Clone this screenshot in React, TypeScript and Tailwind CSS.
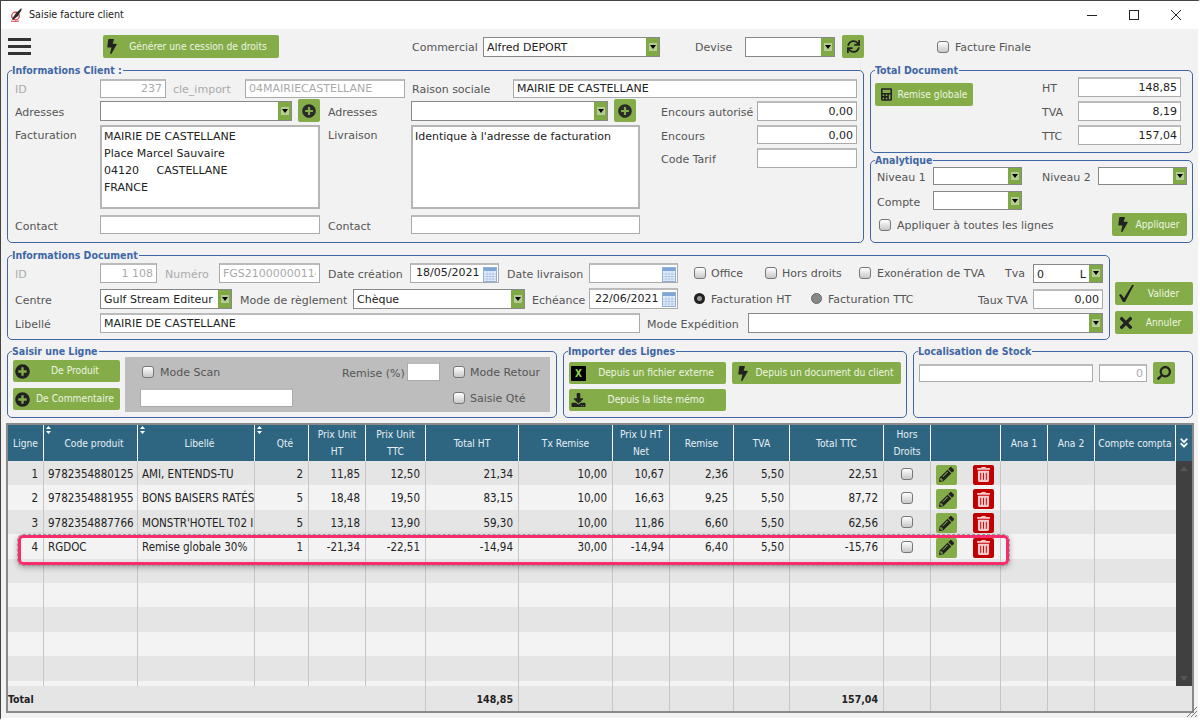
import type { ReactNode } from 'react';
import {
  FaAngleDoubleDown,
  FaBolt,
  FaCalculator,
  FaDownload,
  FaPencilAlt,
  FaPlusCircle,
  FaSearch,
  FaSync,
  FaTimes,
  FaTrashAlt,
} from 'react-icons/fa';

const gridCols =
  'grid grid-cols-[36px_94px_117px_54px_57px_60px_93px_94px_57px_64px_56px_94px_47px_70px_47px_47px_81px]';

function Label({ children, className = '' }: { children: ReactNode; className?: string }) {
  return <span className={`shrink-0 pt-[4px] leading-[14px] whitespace-nowrap text-[#555] ${className}`}>{children}</span>;
}

function Field({ value = '', className = '', right, disabled }: { value?: string; className?: string; right?: boolean; disabled?: boolean }) {
  return (
    <input
      readOnly
      value={value}
      className={`shrink-0 border border-[#aaa] border-t-2 border-t-[#bbb] bg-white px-[3px] text-[11px] outline-none ${right ? 'text-right' : ''} ${disabled ? 'text-[#aaa]' : 'text-[#222]'} ${className}`}
    />
  );
}

function Select({ value = '', className = '' }: { value?: ReactNode; className?: string }) {
  return (
    <div className={`flex shrink-0 items-stretch border border-[#888] bg-white text-[#222] ${className}`}>
      <span className="flex-1 overflow-hidden pl-[3px] leading-[20px] whitespace-nowrap">{value}</span>
      <span className="flex w-[13px] items-center justify-center bg-[#7fa945]">
        <span className="flex h-[8px] w-[8px] items-center justify-center bg-[#b4cc92]">
          <span className="h-0 w-0 border-x-[3px] border-t-[4px] border-x-transparent border-t-black" />
        </span>
      </span>
    </div>
  );
}

function Check({ className = '' }: { className?: string }) {
  return <span className={`block h-[12px] w-[12px] shrink-0 rounded-[3px] border border-[#777] bg-gradient-to-b from-white to-[#c8c8c8] ${className}`} />;
}

function Btn({ icon, children, className = '', textClass = '' }: { icon?: ReactNode; children?: ReactNode; className?: string; textClass?: string }) {
  return (
    <div className={`flex shrink-0 items-center rounded-[2px] bg-[#84ad49] text-[10.2px] text-[#eef4e2] [font-stretch:condensed] ${className}`}>
      {icon}
      {children && <span className={`flex-1 text-center whitespace-nowrap ${textClass}`}>{children}</span>}
    </div>
  );
}

function PlusBtn() {
  return (
    <div className="flex h-[23px] w-[22px] shrink-0 items-center justify-center rounded-[2px] bg-[#84ad49]">
      <FaPlusCircle className="h-[14px] w-[14px] text-[#2a2a2a]" />
    </div>
  );
}

function Group({ title, className = '', children }: { title: string; className?: string; children: ReactNode }) {
  return (
    <fieldset className={`shrink-0 rounded-[5px] border border-[#3f67a5] ${className}`}>
      <legend className="ml-[4px] h-[14px] bg-[#f2f2f2] pr-[1px] text-[10.5px] leading-[14px] font-bold text-[#3f67a5] [font-stretch:condensed]">{title}</legend>
      {children}
    </fieldset>
  );
}

function Calendar() {
  return (
    <svg viewBox="0 0 14 16" className="h-[16px] w-[14px] shrink-0">
      <rect x="0.5" y="1.5" width="13" height="14" fill="#e8f0fa" stroke="#8fb0d8" />
      <rect x="1" y="2" width="12" height="3" fill="#7ea6d6" />
      <path d="M1 8h12M1 10.5h12M1 13h12M4 5v10M7 5v10M10 5v10" stroke="#a8c2e4" strokeWidth="0.8" />
    </svg>
  );
}

function DateField({ value = '', className = '' }: { value?: string; className?: string }) {
  return (
    <div className={`flex shrink-0 items-center border border-[#aaa] border-t-2 border-t-[#bbb] bg-white pr-[1px] pl-[5px] text-[#222] ${className}`}>
      <span className="flex-1">{value}</span>
      <Calendar />
    </div>
  );
}

function Sort() {
  return (
    <svg viewBox="0 0 5 8" className="absolute top-[1px] left-[2px] h-[8px] w-[5px] fill-white">
      <path d="M2.5 0 5 3H0zM2.5 8 0 5h5z" />
    </svg>
  );
}

const headers: { label: ReactNode; sort?: boolean }[] = [
  { label: 'Ligne' },
  { label: 'Code produit', sort: true },
  { label: 'Libellé', sort: true },
  { label: 'Qté', sort: true },
  { label: <>Prix Unit<br />HT</> },
  { label: <>Prix Unit<br />TTC</> },
  { label: 'Total HT' },
  { label: 'Tx Remise' },
  { label: <>Prix U HT<br />Net</> },
  { label: 'Remise' },
  { label: 'TVA' },
  { label: 'Total TTC' },
  { label: <>Hors<br />Droits</> },
  { label: '' },
  { label: 'Ana 1' },
  { label: 'Ana 2' },
  { label: 'Compte compta' },
];

const rows = [
  ['1', '9782354880125', 'AMI, ENTENDS-TU', '2', '11,85', '12,50', '21,34', '10,00', '10,67', '2,36', '5,50', '22,51'],
  ['2', '9782354881955', 'BONS BAISERS RATÉS', '5', '18,48', '19,50', '83,15', '10,00', '16,63', '9,25', '5,50', '87,72'],
  ['3', '9782354887766', "MONSTR'HOTEL T02 I", '5', '13,18', '13,90', '59,30', '10,00', '11,86', '6,60', '5,50', '62,56'],
  ['4', 'RGDOC', 'Remise globale 30%', '1', '-21,34', '-22,51', '-14,94', '30,00', '-14,94', '6,40', '5,50', '-15,76'],
];

function Cell({ children, left, className = '' }: { children?: ReactNode; left?: boolean; className?: string }) {
  return (
    <div className={`overflow-hidden border-r border-[#c6c6c6] pt-[1px] leading-[24px] whitespace-nowrap ${left ? 'pr-[2px] pl-[4px] text-left' : 'pr-[5px] pl-[2px] text-right'} ${className}`}>
      {children}
    </div>
  );
}

function Row({ data, index }: { data?: string[]; index: number }) {
  const bg = index % 2 === 0 ? 'bg-[#e5e5e5]' : 'bg-[#f3f3f3]';
  return (
    <div className={`${gridCols} h-[24.4px] shrink-0 ${bg}`}>
      {data ? (
        data.map((v, i) => (
          <Cell key={i} left={i === 1 || i === 2}>
            {v}
          </Cell>
        ))
      ) : (
        Array.from({ length: 12 }).map((_, i) => <Cell key={i} />)
      )}
      <div className="flex items-center justify-center border-r border-[#c6c6c6] pt-[1px]">{data && <Check />}</div>
      <div className="flex items-center gap-[16px] border-r border-[#c6c6c6] pt-[3px] pl-[5px]">
        {data && (
          <>
            <div className="flex h-[20px] w-[21px] items-center justify-center rounded-[2px] bg-[#84ad49]">
              <FaPencilAlt className="h-[15px] w-[15px] text-[#222]" />
            </div>
            <div className="flex h-[20px] w-[21px] items-center justify-center rounded-[2px] bg-[#c00000]">
              <FaTrashAlt className="h-[15px] w-[13px] text-[#f5c9c9]" />
            </div>
          </>
        )}
      </div>
      <Cell />
      <Cell />
      <Cell className="border-r-0" />
    </div>
  );
}

export default function App() {
  return (
    <div className="flex h-[720px] w-[1200px] flex-col overflow-hidden border-t border-r-2 border-b-2 border-l border-[#444] border-r-white border-b-white bg-[#f2f2f2] font-['DejaVu_Sans',sans-serif] text-[11px]">
      {/* title bar */}
      <div className="flex h-[28px] shrink-0 items-center bg-white pl-[9px] text-[#222]">
        <svg viewBox="0 0 12 14" className="h-[14px] w-[12px] shrink-0">
          <circle cx="5.5" cy="8" r="3.8" fill="none" stroke="#d8343f" strokeWidth="1.2" />
          <path d="M1 13c2 .5 5 .5 8 0" fill="none" stroke="#d8343f" />
          <path d="M11.5 0 6 5 2 11l1 1 5-4 3.5-6z" fill="#2a2a2a" />
        </svg>
        <span className="ml-[7px] pt-px text-[10.7px] [font-stretch:condensed]">Saisie facture client</span>
        <div className="ml-auto flex items-center pr-[17px]">
          <span className="h-px w-[10px] bg-[#222]" />
          <span className="ml-[32px] h-[10px] w-[10px] border border-[#222]" />
          <svg viewBox="0 0 10 10" className="ml-[32px] h-[10px] w-[10px] stroke-[#222]">
            <path d="M0 0l10 10M10 0 0 10" />
          </svg>
        </div>
      </div>

      {/* toolbar */}
      <div className="flex h-[34px] shrink-0 items-center pt-[1px]">
        <div className="ml-[7px] flex w-[23px] flex-col gap-[4px]">
          <span className="h-[3px] bg-[#333]" />
          <span className="h-[3px] bg-[#333]" />
          <span className="h-[3px] bg-[#333]" />
        </div>
        <Btn icon={<FaBolt className="ml-[4px] h-[15px] w-[10px] text-[#222]" />} className="ml-[72px] h-[23px] w-[176px]">
          Générer une cession de droits
        </Btn>
        <Label className="ml-[133px] w-[71px] pb-[2px]">Commercial</Label>
        <Select value="Alfred DEPORT" className="h-[20px] w-[177px]" />
        <Label className="ml-[35px] w-[50px] pb-[2px]">Devise</Label>
        <Select className="h-[20px] w-[90px]" />
        <Btn icon={<FaSync className="mx-auto h-[13px] w-[13px] text-[#222]" />} className="ml-[7px] h-[23px] w-[22px]" />
        <Check className="ml-[73px]" />
        <Label className="ml-[6px] pb-[2px]">Facture Finale</Label>
      </div>

      <div className="flex shrink-0">
        {/* client */}
        <Group title="Informations Client :" className="ml-[6px] h-[180px] w-[857px]">
          <div className="mt-[1px] flex h-[20px] items-center pl-[7px]">
            <Label className="w-[85px] text-[#aaa]">ID</Label>
            <Field value="237" right disabled className="h-[19px] w-[66px]" />
            <Label className="ml-[7px] w-[72px] text-[#aaa]">cle_import</Label>
            <Field value="04MAIRIECASTELLANE" disabled className="h-[19px] w-[160px]" />
            <Label className="ml-[7px] w-[101px]">Raison sociale</Label>
            <Field value="MAIRIE DE CASTELLANE" className="h-[19px] w-[344px]" />
          </div>
          <div className="mt-[1px] flex h-[23px] items-center pl-[7px]">
            <Label className="w-[85px]">Adresses</Label>
            <Select className="h-[20px] w-[192px]" />
            <div className="ml-[6px]"><PlusBtn /></div>
            <Label className="ml-[8px] w-[83px]">Adresses</Label>
            <Select className="h-[20px] w-[197px]" />
            <div className="ml-[6px]"><PlusBtn /></div>
            <Label className="ml-[25px] w-[96px]">Encours autorisé</Label>
            <Field value="0,00" right className="h-[20px] w-[100px]" />
          </div>
          <div className="mt-[3px] flex pl-[7px]">
            <Label className="w-[85px]">Facturation</Label>
            <textarea
              readOnly
              value={'MAIRIE DE CASTELLANE\nPlace Marcel Sauvaire\n04120     CASTELLANE\nFRANCE'}
              className="h-[84px] w-[220px] shrink-0 resize-none border-2 border-[#b5b5b5] bg-white px-[2px] py-px text-[11px] leading-[17px] whitespace-pre text-[#222] outline-none"
            />
            <Label className="ml-[8px] w-[83px]">Livraison</Label>
            <textarea
              readOnly
              value="Identique à l'adresse de facturation"
              className="h-[84px] w-[229px] shrink-0 resize-none border-2 border-[#b5b5b5] bg-white px-[2px] py-px text-[11px] leading-[17px] text-[#222] outline-none"
            />
            <div className="ml-[21px] flex flex-col gap-[4px]">
              <div className="flex items-center">
                <Label className="w-[96px]">Encours</Label>
                <Field value="0,00" right className="h-[19px] w-[100px]" />
              </div>
              <div className="flex items-center">
                <Label className="w-[96px] pb-[1px]">Code Tarif</Label>
                <Field className="h-[20px] w-[100px]" />
              </div>
            </div>
          </div>
          <div className="mt-[6px] flex items-center pl-[7px]">
            <Label className="w-[85px]">Contact</Label>
            <Field className="h-[19px] w-[220px]" />
            <Label className="ml-[8px] w-[83px]">Contact</Label>
            <Field className="h-[19px] w-[229px]" />
          </div>
        </Group>

        <div className="ml-[6px] flex w-[323px] shrink-0 flex-col">
          <Group title="Total Document" className="h-[90px] w-full">
            <div className="flex">
              <Btn icon={<FaCalculator className="ml-[6px] h-[15px] w-[11px] text-[#222]" />} className="mt-[6px] ml-[4px] h-[23px] w-[98px]">
                Remise globale
              </Btn>
              <div className="ml-[69px] flex flex-col gap-[4px]">
                <div className="flex items-center">
                  <Label className="w-[36px]">HT</Label>
                  <Field value="148,85" right className="h-[20px] w-[103px]" />
                </div>
                <div className="flex items-center">
                  <Label className="w-[36px]">TVA</Label>
                  <Field value="8,19" right className="h-[20px] w-[103px]" />
                </div>
                <div className="flex items-center">
                  <Label className="w-[36px]">TTC</Label>
                  <Field value="157,04" right className="h-[20px] w-[103px]" />
                </div>
              </div>
            </div>
          </Group>
          <Group title="Analytique" className="h-[90px] w-full">
            <div className="flex h-[18px] items-center pl-[6px]">
              <Label className="w-[56px]">Niveau 1</Label>
              <Select className="h-[18px] w-[89px]" />
              <Label className="ml-[20px] w-[56px]">Niveau 2</Label>
              <Select className="h-[18px] w-[89px]" />
            </div>
            <div className="mt-[6px] flex items-center pl-[6px]">
              <Label className="w-[56px]">Compte</Label>
              <Select className="h-[19px] w-[89px]" />
            </div>
            <div className="mt-[3px] flex items-center pl-[8px]">
              <Check />
              <Label className="ml-[6px] pb-[2px]">Appliquer à toutes les lignes</Label>
              <Btn icon={<FaBolt className="ml-[6px] h-[15px] w-[10px] text-[#222]" />} className="mr-[5px] ml-auto h-[23px] w-[75px]">
                Appliquer
              </Btn>
            </div>
          </Group>
        </div>
      </div>

      <div className="mt-[5px] flex shrink-0">
        {/* document */}
        <Group title="Informations Document" className="ml-[6px] h-[92px] w-[1103px]">
          <div className="mt-[1px] flex h-[20px] items-center pl-[7px]">
            <Label className="w-[85px] text-[#aaa]">ID</Label>
            <Field value="1 108" right disabled className="h-[20px] w-[57px]" />
            <Label className="ml-[8px] w-[54px] text-[#aaa]">Numéro</Label>
            <Field value="FGS2100000011456" disabled className="h-[20px] w-[101px]" />
            <Label className="ml-[8px] w-[82px]">Date création</Label>
            <DateField value="18/05/2021" className="h-[20px] w-[89px]" />
            <Label className="ml-[8px] w-[82px]">Date livraison</Label>
            <DateField className="h-[20px] w-[89px]" />
            <Check className="ml-[16px]" />
            <Label className="ml-[5px] w-[54px] pb-[2px]">Office</Label>
            <Check />
            <Label className="ml-[5px] w-[77px] pb-[2px]">Hors droits</Label>
            <Check />
            <Label className="ml-[6px] w-[128px] pb-[2px]">Exonération de TVA</Label>
            <Label className="w-[28px] pb-[2px]">Tva</Label>
            <Select
              value={
                <span className="flex justify-between pr-[3px]">
                  <span>0</span>
                  <span>L</span>
                </span>
              }
              className="h-[19px] w-[70px]"
            />
          </div>
          <div className="mt-[5px] flex h-[21px] items-center pl-[7px]">
            <Label className="w-[85px]">Centre</Label>
            <Select value="Gulf Stream Editeur" className="h-[20px] w-[132px]" />
            <Label className="ml-[8px] w-[113px]">Mode de règlement</Label>
            <Select value="Chèque" className="h-[20px] w-[172px]" />
            <Label className="ml-[7px] w-[57px]">Echéance</Label>
            <DateField value="22/06/2021" className="h-[21px] w-[89px]" />
            <span className="ml-[16px] flex h-[11px] w-[11px] shrink-0 items-center justify-center rounded-full bg-[#222]">
              <span className="h-[5px] w-[5px] rounded-full bg-[#999]" />
            </span>
            <Label className="ml-[6px] w-[100px] pb-[1px]">Facturation HT</Label>
            <span className="h-[11px] w-[11px] shrink-0 rounded-full border border-[#666] bg-[#888]" />
            <Label className="ml-[6px] w-[150px] pb-[1px]">Facturation TTC</Label>
            <Label className="w-[55px]">Taux TVA</Label>
            <Field value="0,00" right className="h-[20px] w-[70px]" />
          </div>
          <div className="mt-[4px] flex h-[20px] items-center pl-[7px]">
            <Label className="w-[85px]">Libellé</Label>
            <Field value="MAIRIE DE CASTELLANE" className="h-[20px] w-[540px]" />
            <Label className="ml-[7px] w-[101px]">Mode Expédition</Label>
            <Select className="h-[20px] w-[355px]" />
          </div>
        </Group>
        <div className="ml-[5px] flex flex-col gap-[6px] pt-[34px]">
          <Btn
            icon={
              <svg viewBox="0 0 15 17" className="ml-[4px] h-[17px] w-[15px] fill-[#222]">
                <path d="M0 10l2-1 3 4L13 0h2L6 17H4z" />
              </svg>
            }
            className="h-[23px] w-[78px]"
          >
            Valider
          </Btn>
          <Btn icon={<FaTimes className="ml-[3px] h-[18px] w-[16px] text-[#222]" />} className="h-[23px] w-[78px]">
            Annuler
          </Btn>
        </div>
      </div>

      <div className="mt-[4px] flex shrink-0">
        <Group title="Saisir une Ligne" className="ml-[6px] h-[74px] w-[550px]">
          <div className="flex pl-[5px]">
            <div className="flex flex-col gap-[6px] pt-[2px]">
              <Btn icon={<FaPlusCircle className="ml-[2px] h-[15px] w-[15px] text-[#222]" />} className="h-[22px] w-[107px]">
                De Produit
              </Btn>
              <Btn icon={<FaPlusCircle className="ml-[2px] h-[15px] w-[15px] text-[#222]" />} className="h-[22px] w-[107px]">
                De Commentaire
              </Btn>
            </div>
            <div className="-mt-px ml-[5px] h-[55px] w-[425px] bg-[#bdbdbd] pt-[5px] pl-[15px]">
              <div className="flex h-[19px] items-center">
                <Check className="ml-[2px]" />
                <Label className="ml-[6px] w-[182px] pb-[1px]">Mode Scan</Label>
                <Label className="w-[65px]">Remise (%)</Label>
                <Field className="h-[19px] w-[33px]" />
                <Check className="ml-[13px]" />
                <Label className="ml-[5px] pb-[2px]">Mode Retour</Label>
              </div>
              <div className="mt-[7px] flex h-[19px] items-center">
                <Field className="h-[19px] w-[153px]" />
                <Check className="ml-[160px]" />
                <Label className="ml-[5px] pb-[1px]">Saisie Qté</Label>
              </div>
            </div>
          </div>
        </Group>

        <Group title="Importer des Lignes" className="ml-[6px] h-[74px] w-[344px]">
          <div className="flex gap-[6px] pt-[4px] pl-[5px]">
            <Btn
              icon={
                <span className="ml-[2px] flex h-[15px] w-[15px] items-center justify-center rounded-[1px] bg-black text-[10px] font-bold text-[#8fd14f]">
                  X
                </span>
              }
              className="h-[22px] w-[157px]"
            >
              Depuis un fichier externe
            </Btn>
            <Btn icon={<FaBolt className="ml-[6px] h-[15px] w-[10px] text-[#222]" />} className="h-[22px] w-[169px]">
              Depuis un document du client
            </Btn>
          </div>
          <div className="mt-[5px] pl-[5px]">
            <Btn icon={<FaDownload className="ml-[2px] h-[14px] w-[15px] text-[#222]" />} className="h-[22px] w-[157px]">
              Depuis la liste mémo
            </Btn>
          </div>
        </Group>

        <Group title="Localisation de Stock" className="ml-[6px] h-[74px] w-[280px]">
          <div className="flex items-center pt-[4px] pl-[5px]">
            <Field className="h-[18px] w-[174px]" />
            <Field value="0" right disabled className="ml-[6px] h-[18px] w-[48px]" />
            <Btn icon={<FaSearch className="mx-auto h-[14px] w-[14px] -scale-x-100 text-[#222]" />} className="ml-[6px] h-[22px] w-[22px]" />
          </div>
        </Group>
      </div>

      {/* lines grid */}
      <div className="relative mt-[5px] ml-[5px] flex h-[290px] w-[1188px] shrink-0 flex-col border-2 border-[#8a8a8a] text-[11.5px] text-[#222] [font-stretch:condensed]">
        <div className="flex h-[36px] shrink-0 bg-[#2e6682] text-[10.2px] leading-[17px] text-[#e6eef2]">
          <div className={`${gridCols} flex-1`}>
            {headers.map((h, i) => (
              <div key={i} className={`relative flex items-center justify-center border-r border-white text-center whitespace-nowrap ${h.sort ? 'pl-[7px]' : ''}`}>
                {h.sort && <Sort />}
                <span>{h.label}</span>
              </div>
            ))}
          </div>
          <div className="flex w-[16px] items-center justify-center">
            <FaAngleDoubleDown className="h-[12px] w-[10px] text-white" />
          </div>
        </div>

        <div className="flex h-[225px] shrink-0">
          <div className="w-[1168px] overflow-hidden">
            {Array.from({ length: 10 }).map((_, i) => (
              <Row key={i} index={i} data={rows[i]} />
            ))}
          </div>
          <div className="flex w-[16px] flex-col items-center justify-between bg-[#404040] py-[5px]">
            <span className="h-0 w-0 border-x-[4px] border-b-[5px] border-x-transparent border-b-[#555]" />
            <span className="h-0 w-0 border-x-[4px] border-t-[5px] border-x-transparent border-t-[#555]" />
          </div>
        </div>

        <div className={`${gridCols} h-[25px] shrink-0 bg-[#e5e5e5] text-[10.5px] font-bold`}>
          <div className="col-span-6 border-r border-[#c6c6c6] pt-[1px] leading-[24px]">Total</div>
          <Cell>148,85</Cell>
          <Cell />
          <Cell />
          <Cell />
          <Cell />
          <Cell>157,04</Cell>
          <Cell />
          <Cell />
          <Cell />
          <Cell />
          <Cell className="border-r-0" />
        </div>

        {/* highlight drawn over the screenshot */}
        <div className="absolute top-[110px] left-[10px] h-[30px] w-[991px] rounded-[5px] border-[3px] border-[#f72d6b] shadow-[0_2px_6px_rgba(0,0,0,0.35)] outline-1 outline-[#999] outline-dashed" />
      </div>

      {/* resize grip */}
      <svg viewBox="0 0 10 10" className="absolute top-[707px] left-[1187px] h-[10px] w-[10px] stroke-[#777]">
        <path d="M0 10 10 0M4 10l6-6M8 10l2-2" />
      </svg>
    </div>
  );
}
